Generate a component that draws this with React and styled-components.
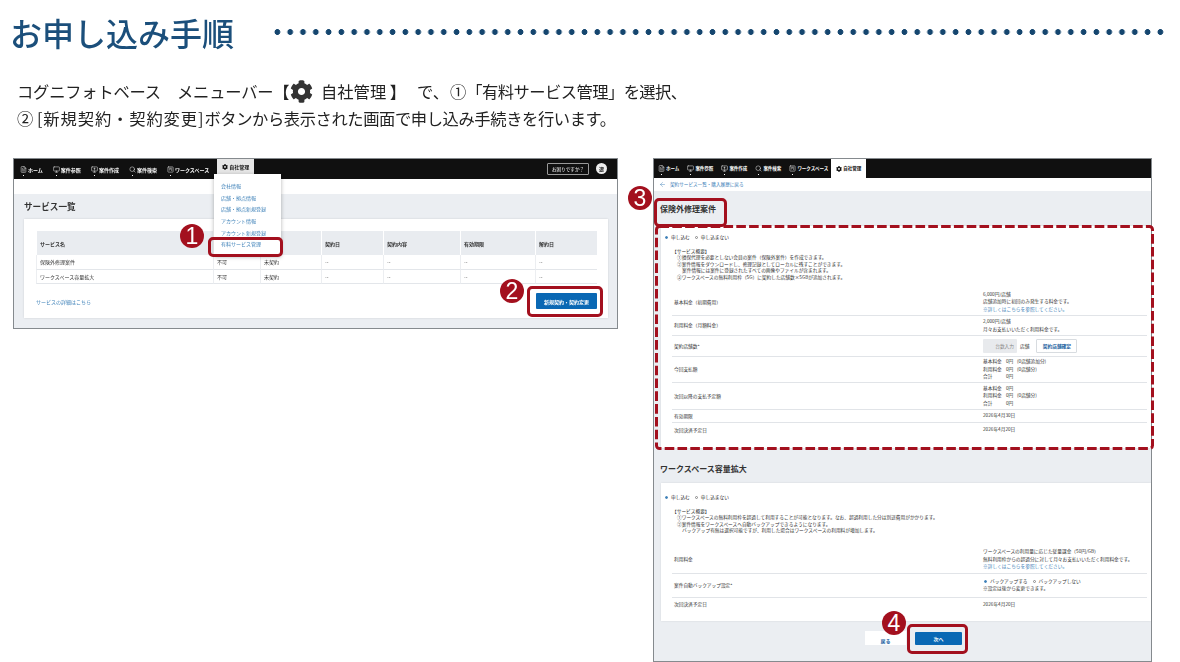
import React from "react";
import styled, { createGlobalStyle } from "styled-components";
import { FaCog } from "react-icons/fa";
import { FileText, Monitor, MonitorUp, Search, SquareKanban, ArrowLeft } from "lucide-react";

const RED = "#a3101e";
const BLUE = "#0a68b4";
const LINK = "#3d80b8";
const JP = `"Noto Sans CJK JP", "Noto Sans", sans-serif`;

const Global = createGlobalStyle`
  html, body { margin: 0; padding: 0; background: #fff; }
  body { width: 1180px; height: 662px; overflow: hidden; font-family: ${JP}; color: #222; }
`;
const Page = styled.div`width: 1180px; height: 662px; overflow: hidden; background: #fff;`;
const Header = styled.header`
  display: flex; align-items: center; gap: 36.6px; height: 64px; padding: 0 14.4px 0 10px;
  filter: blur(0.3px);
`;
const Title = styled.h1`
  margin: 0; font-size: 32px; line-height: 40px; font-weight: 500; color: #1b4f7b; white-space: nowrap;
`;
const Dots = styled.div`
  flex: 1; height: 8px;
  background-image: radial-gradient(circle at center, #15466f 2.6px, transparent 3.2px);
  background-size: 12.8px 8px; background-repeat: repeat-x;
`;
const Intro = styled.div`
  margin-top: 14px; padding-left: 17px; font-size: 16.3px; line-height: 27px; color: #222;
  filter: blur(0.25px); white-space: pre;
`;
const Spaced = styled.span`
  letter-spacing: ${p => p.$ls || 0}px; margin-left: ${p => p.$ml || 0}px;
`;
const InlineGear = styled(FaCog)`
  color: #333; font-size: 23px; vertical-align: -5px; margin: 0 4px 0 1px;
`;
const Shots = styled.div`
  display: flex; align-items: flex-start; gap: 35px; margin-top: 26px; padding-left: 13px;
`;
const Shot = styled.section`
  position: relative; box-sizing: border-box; flex: none; width: ${p => p.$w}px; height: ${p => p.$h}px;
  border: 1px solid #858a8e; background: #ebeef2; font-size: ${p => p.$fs || 5}px;
  line-height: 1.4; filter: blur(0.42px); color: #333;
`;
const Nav = styled.nav`
  display: flex; align-items: center; height: ${p => p.$h}px; padding-left: ${p => p.$pl}px;
  gap: ${p => p.$gap}px; background: #101010; color: #fff; font-weight: 700; font-size: ${p => p.$fs}px;
`;
const NavItem = styled.span`
  display: flex; align-items: center; gap: 1px; white-space: nowrap; position: relative;
  &::after { content: ""; position: absolute; left: 3px; bottom: -3px; width: 1px; height: 1px; background: #fff; }
`;
const NavTab = styled.span`
  display: flex; align-items: center; gap: 1px; align-self: flex-start; height: ${p => p.$h}px;
  margin-left: ${p => p.$ml}px; padding: 0 5px; background: ${p => p.$bg}; color: #111; white-space: nowrap;
`;
const NavRight = styled.div`
  margin-left: auto; display: flex; align-items: center; gap: 7px; padding-right: 10px;
`;
const HelpButton = styled.span`
  display: flex; align-items: center; justify-content: center; width: 42px; height: 12px; box-sizing: border-box;
  border: 1px solid #999; border-radius: 1px; font-size: 4.6px; font-weight: 400;
`;
const Avatar = styled.span`
  display: flex; align-items: center; justify-content: center; width: 11px; height: 11px; border-radius: 50%;
  background: #eee; color: #222; font-size: 5px; margin-bottom: 2px;
`;
const WhiteBar = styled.div`
  display: flex; align-items: center; gap: 4px; height: ${p => p.$h}px; background: #fff; padding-left: 5px;
  color: ${LINK}; font-size: 4.6px;
`;
const SectionTitle = styled.h2`
  display: flex; align-items: center; margin: 0; height: ${p => p.$h}px; padding-left: ${p => p.$pl}px;
  font-size: ${p => p.$fs}px; font-weight: 700; color: #333;
`;
const ListCard = styled.div`
  box-sizing: border-box; height: 99px; margin: 0 9px 0 10px; padding: 12px 11px 0 12px;
  background: #fff; box-shadow: 0 0 2px rgba(0,0,0,.12);
`;
const Table = styled.div`
  display: grid; grid-template-columns: 177px 47px 61px 62px 77px 75px 62px;
  grid-template-rows: 24px 14.5px 14.5px;
`;
const HeadCell = styled.div`
  display: flex; align-items: center; padding-left: 3px; background: #e9ecf0; font-weight: 700;
  border-left: 1px solid #fff; box-sizing: border-box;
`;
const Cell = styled.div`
  display: flex; align-items: center; padding-left: 3px; border-bottom: 1px solid #e3e6ea;
  border-left: 1px solid #eceef1; box-sizing: border-box;
`;
const TableHead = styled.div`display: contents;`;
const ListFoot = styled.div`
  display: flex; align-items: center; justify-content: space-between; margin-top: 9px;
`;
const LinkText = styled.span`color: ${LINK}; font-size: ${p => p.$fs || 5}px;`;
const PrimaryBtn = styled.span`
  display: flex; align-items: center; justify-content: center; width: ${p => p.$w}px; height: ${p => p.$h}px;
  background: ${BLUE}; color: #fff; font-weight: 700; font-size: 5px; border-radius: 1px;
`;
const Menu = styled.div`
  position: absolute; left: 200px; top: 15px; width: 67px; height: 82px; box-sizing: border-box; padding-top: 6px;
  background: #fff; box-shadow: 0 1px 4px rgba(0,0,0,.3); color: ${LINK}; z-index: 1;
`;
const MenuItem = styled.div`
  height: 11.7px; line-height: 11.7px; padding-left: 7px; white-space: nowrap;
`;
const Highlight = styled.div`
  position: absolute; left: ${p => p.$x}px; top: ${p => p.$y}px; width: ${p => p.$w}px; height: ${p => p.$h}px;
  box-sizing: border-box; border: 3.4px solid ${RED}; border-radius: 5px; z-index: 3;
`;
const Badge = styled.div`
  position: absolute; left: ${p => p.$x}px; top: ${p => p.$y}px; width: 24px; height: 24px; border-radius: 50%;
  background: ${RED}; color: #fff; display: flex; align-items: center; justify-content: center;
  font: 400 23px/24px "Liberation Sans", sans-serif; z-index: 4;
`;
const DashFrame = styled.svg`
  position: absolute; left: 1px; top: 66px; z-index: 2; overflow: visible;
`;
const FormCard = styled.div`
  box-sizing: border-box; height: ${p => p.$h}px; margin-left: 7px; padding: ${p => p.$pt}px 0 0 11px;
  background: #fff; box-shadow: 0 0 2px rgba(0,0,0,.1); font-size: 4.7px; line-height: 6.5px;
`;
const RadioLine = styled.div`
  display: flex; align-items: center; gap: 3px; margin-left: ${p => p.$ml || -7}px; white-space: nowrap;
`;
const Radio = styled.span`
  width: 3px; height: 3px; border-radius: 50%; box-sizing: border-box;
  border: 0.6px solid ${p => (p.$on ? LINK : "#888")}; background: ${p => (p.$on ? LINK : "#fff")};
  margin-left: ${p => p.$ml || 0}px;
`;
const Overview = styled.div`
  margin: ${p => p.$mt}px 0 ${p => p.$mb}px 0; white-space: nowrap;
`;
const OverviewLine = styled.div`padding-left: ${p => p.$in}px;`;
const Row = styled.div`
  display: grid; grid-template-columns: 311px 1fr; align-items: center; height: ${p => p.$h}px; margin-right: 4px;
  box-sizing: border-box; border-bottom: ${p => (p.$last ? "none" : "1px solid #e1e4e8")};
`;
const Label = styled.div`padding-left: 2px; font-size: 4.7px;`;
const Value = styled.div`white-space: nowrap; line-height: 7.4px;`;
const ValueLink = styled.div`color: ${LINK};`;
const FeeLine = styled.div`display: grid; grid-template-columns: 22px 10px auto; column-gap: 1px;`;
const InputRow = styled.div`display: flex; align-items: center;`;
const FakeInput = styled.span`
  display: flex; align-items: center; justify-content: flex-end; width: 34px; height: 14px; padding-right: 3px;
  box-sizing: border-box; background: #e8eaed; color: #888; border-radius: 1px;
`;
const Unit = styled.span`margin: 0 7px 0 3px;`;
const OutlineBtn = styled.span`
  display: flex; align-items: center; justify-content: center; width: 41px; height: 14px; box-sizing: border-box;
  border: 0.6px solid #d8dce0; color: #1b5f9f; font-weight: 700; border-radius: 1px;
`;
const GapTitleWrap = styled.div`
  display: flex; align-items: center; height: 35px; padding: 6px 0 0 6px; box-sizing: border-box; font-size: 8px; font-weight: 700;
`;
const Footer = styled.div`
  display: flex; align-items: center; padding: 10px 0 0 211px; gap: 9px;
`;
const BackBtn = styled.span`
  display: flex; align-items: flex-end; justify-content: center; box-sizing: border-box; width: 41px; height: 14px;
  padding-bottom: 2.5px; background: #fff; color: #1b5f9f; font-weight: 700; font-size: 5px; line-height: 5px;
`;

const Gear = styled(FaCog)`font-size: ${p => p.$s}px;`;

const navItems = [
  [FileText, "ホーム"], [Monitor, "案件参照"], [MonitorUp, "案件作成"], [Search, "案件検索"], [SquareKanban, "ワークスペース"],
];

function TopNav({ h, pl, gap, fs, tabH, tabMl, tabBg, right }) {
  return (
    <Nav $h={h} $pl={pl} $gap={gap} $fs={fs}>
      {navItems.map(([Ic, t]) => (
        <NavItem key={t}><Ic size={7} strokeWidth={1.6} />{t}</NavItem>
      ))}
      <NavTab $h={tabH} $ml={tabMl} $bg={tabBg}><Gear $s={6} />自社管理</NavTab>
      {right && (
        <NavRight>
          <HelpButton>お困りですか？</HelpButton>
          <Avatar>遼</Avatar>
        </NavRight>
      )}
    </Nav>
  );
}

const listHead = ["サービス名", "", "", "契約日", "契約内容", "有効期限", "解約日"];
const listRows = [
  ["保険外修理案件", "不可", "未契約", "--", "--", "--", "--"],
  ["ワークスペース容量拡大", "不可", "未契約", "--", "--", "--", "--"],
];
const menu = ["会社情報", "店舗・拠点情報", "店舗・拠点新規登録", "アカウント情報", "アカウント新規登録", "有料サービス管理"];

function LeftShot() {
  return (
    <Shot $w={605} $h={171}>
      <TopNav h={20} pl={6} gap={10} fs={5} tabH={15} tabMl={-2} tabBg="#e6e6e6" right />
      <WhiteBar $h={15} />
      <SectionTitle $h={25} $pl={10} $fs={8.6}>サービス一覧</SectionTitle>
      <ListCard>
        <Table>
          <TableHead>{listHead.map((h, i) => <HeadCell key={i}>{h}</HeadCell>)}</TableHead>
          {listRows.flat().map((c, i) => <Cell key={i}>{c}</Cell>)}
        </Table>
        <ListFoot>
          <LinkText>サービスの詳細はこちら</LinkText>
          <PrimaryBtn $w={61} $h={16}>新規契約・契約変更</PrimaryBtn>
        </ListFoot>
      </ListCard>
      <Menu>{menu.map(m => <MenuItem key={m}>{m}</MenuItem>)}</Menu>
      <Highlight $x={194} $y={78} $w={75} $h={20} />
      <Highlight $x={513} $y={127} $w={76} $h={31} />
      <Badge $x={166} $y={65}>1</Badge>
      <Badge $x={486} $y={120}>2</Badge>
    </Shot>
  );
}

const Fee = ({ a, b, c }) => <FeeLine><span>{a}</span><span>{b}</span><span>{c}</span></FeeLine>;

function RightShot() {
  return (
    <Shot $w={499} $h={504} $fs={4.7}>
      <TopNav h={19} pl={4} gap={8} fs={4.5} tabH={19} tabMl={-5} tabBg="#fff" />
      <WhiteBar $h={13}><ArrowLeft size={7} strokeWidth={1.5} />契約サービス一覧・購入履歴に戻る</WhiteBar>
      <SectionTitle $h={35} $pl={6} $fs={8}>保険外修理案件</SectionTitle>
      <FormCard $h={222} $pt={8}>
        <RadioLine><Radio $on />申し込む<Radio $ml={2} />申し込まない</RadioLine>
        <Overview $mt={7} $mb={9}>
          <div>【サービス概要】</div>
          <OverviewLine $in={5}>①損保代理を必要としない会員の案件（保険外案件）を作成できます。</OverviewLine>
          <OverviewLine $in={5}>②案件情報をダウンロードし、修理記録としてローカルに残すことができます。</OverviewLine>
          <OverviewLine $in={10}>案件情報には案件に登録されたすべての画像やファイルが含まれます。</OverviewLine>
          <OverviewLine $in={5}>③ワークスペースの無料利用枠（5G）に契約した店舗数×5GBが追加されます。</OverviewLine>
        </Overview>
        <Row $h={27}>
          <Label>基本料金（初期費用）</Label>
          <Value>6,000円/店舗<br />店舗追加時に初回のみ発生する料金です。<ValueLink>※詳しくはこちらを参照してください。</ValueLink></Value>
        </Row>
        <Row $h={20}>
          <Label>利用料金（月額料金）</Label>
          <Value>2,000円/店舗<br />月々お支払いいただく利用料金です。</Value>
        </Row>
        <Row $h={21}>
          <Label>契約店舗数*</Label>
          <InputRow><FakeInput>台数入力</FakeInput><Unit>店舗</Unit><OutlineBtn>契約店舗確定</OutlineBtn></InputRow>
        </Row>
        <Row $h={26}>
          <Label>今回支払額</Label>
          <Value><Fee a="基本料金" b="0円" c="(0店舗追加分)" /><Fee a="利用料金" b="0円" c="(0店舗分)" /><Fee a="合計" b="0円" /></Value>
        </Row>
        <Row $h={27}>
          <Label>次回以降の支払予定額</Label>
          <Value><Fee a="基本料金" b="0円" /><Fee a="利用料金" b="0円" c="(0店舗分)" /><Fee a="合計" b="0円" /></Value>
        </Row>
        <Row $h={13}><Label>有効期限</Label><Value>2026年4月30日</Value></Row>
        <Row $h={14} $last><Label>次回決済予定日</Label><Value>2026年4月20日</Value></Row>
      </FormCard>
      <GapTitleWrap>ワークスペース容量拡大</GapTitleWrap>
      <FormCard $h={138} $pt={11}>
        <RadioLine><Radio $on />申し込む<Radio $ml={2} />申し込まない</RadioLine>
        <Overview $mt={7} $mb={13}>
          <div>【サービス概要】</div>
          <OverviewLine $in={5}>①ワークスペースの無料利用枠を超過して利用することが可能となります。なお、超過利用した分は別途費用がかかります。</OverviewLine>
          <OverviewLine $in={5}>②案件情報をワークスペースへ自動バックアップできるようになります。</OverviewLine>
          <OverviewLine $in={10}>バックアップ有無は選択可能ですが、利用した場合はワークスペースの利用料が増加します。</OverviewLine>
        </Overview>
        <Row $h={27}>
          <Label>利用料金</Label>
          <Value>ワークスペースの利用量に応じた従量課金（50円/GB）<br />無料利用枠からの超過分に対して月々お支払いいただく利用料金です。<ValueLink>※詳しくはこちらを参照してください。</ValueLink></Value>
        </Row>
        <Row $h={24}>
          <Label>案件自動バックアップ設定*</Label>
          <Value><RadioLine $ml={1}><Radio $on />バックアップする<Radio $ml={2} />バックアップしない</RadioLine>※設定は後から変更できます。</Value>
        </Row>
        <Row $h={14} $last><Label>次回決済予定日</Label><Value>2026年4月20日</Value></Row>
      </FormCard>
      <Footer>
        <BackBtn>戻る</BackBtn>
        <PrimaryBtn $w={47} $h={13}>次へ</PrimaryBtn>
      </Footer>
      <DashFrame width="497" height="224" viewBox="0 0 497 224">
        <rect x="1.5" y="1.5" width="496" height="222" rx="3" fill="none" stroke={RED} strokeWidth="3" strokeDasharray="9.6 3.2" />
      </DashFrame>
      <Highlight $x={0} $y={39} $w={73} $h={29} />
      <Highlight $x={253} $y={465} $w={61} $h={30} />
      <Badge $x={-26} $y={27}>3</Badge>
      <Badge $x={228} $y={452}>4</Badge>
    </Shot>
  );
}

export default function App() {
  return (
    <Page>
      <Global />
      <Header>
        <Title>お申し込み手順</Title>
        <Dots />
      </Header>
      <Intro>
        <div>
          <Spaced $ls={-0.2}>コグニフォトベース　メニューバー【</Spaced><InlineGear /> 自社管理 】<Spaced $ml={11}>で、</Spaced>
          <Spaced $ml={1}>①</Spaced><Spaced $ls={-0.55}>「有料サービス管理」を選択、</Spaced>
        </div>
        <div>
          ② <Spaced $ls={0.9}>[新規契約・契約変更]</Spaced><Spaced $ls={-0.4}>ボタンから表示された画面で申し込み手続きを行います。</Spaced>
        </div>
      </Intro>
      <Shots>
        <LeftShot />
        <RightShot />
      </Shots>
    </Page>
  );
}
